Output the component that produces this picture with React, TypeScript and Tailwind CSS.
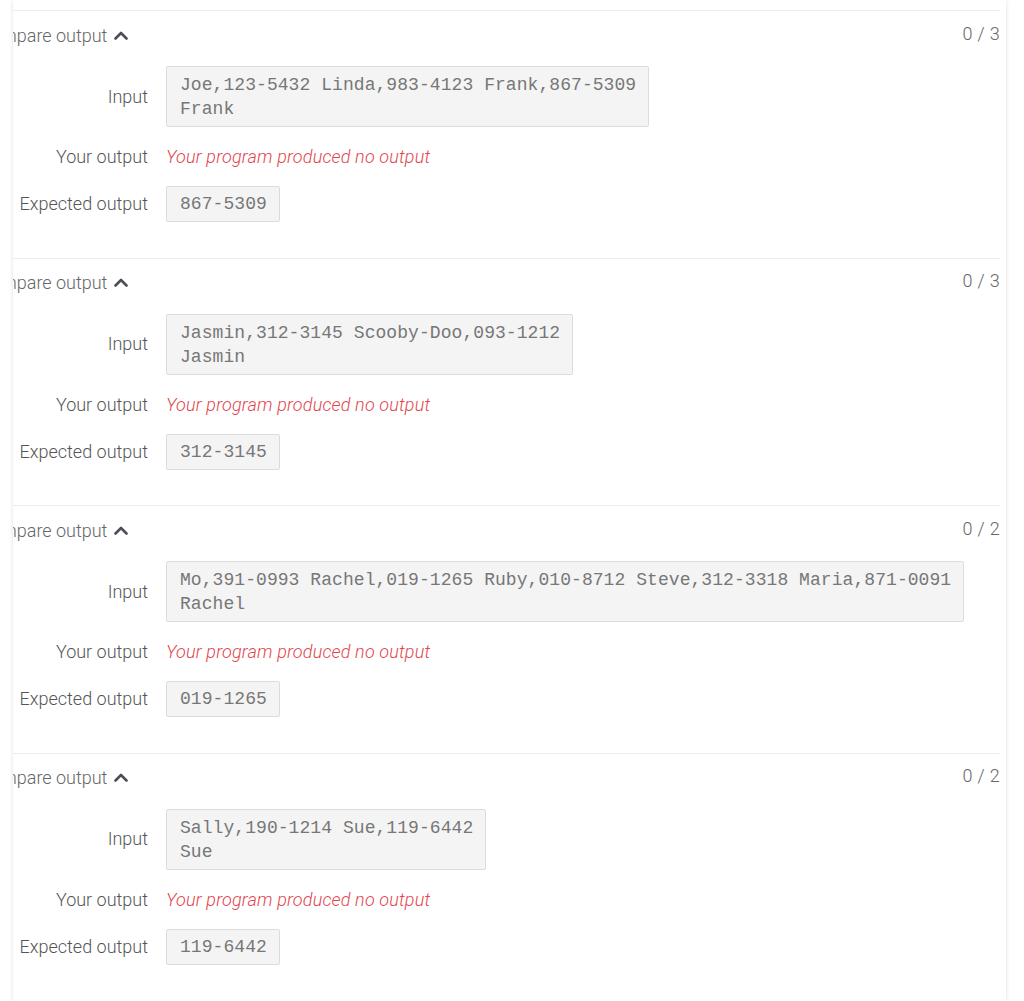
import React from "react";

type Case = { input: string[]; expected: string; score: string };

const cases: Case[] = [
  { input: ["Joe,123-5432 Linda,983-4123 Frank,867-5309", "Frank"], expected: "867-5309", score: "0 / 3" },
  { input: ["Jasmin,312-3145 Scooby-Doo,093-1212", "Jasmin"], expected: "312-3145", score: "0 / 3" },
  { input: ["Mo,391-0993 Rachel,019-1265 Ruby,010-8712 Steve,312-3318 Maria,871-0091", "Rachel"], expected: "019-1265", score: "0 / 2" },
  { input: ["Sally,190-1214 Sue,119-6442", "Sue"], expected: "119-6442", score: "0 / 2" },
];

const roboto = { fontFamily: "Roboto, 'Noto Sans', sans-serif" };
const mono = { fontFamily: "'Liberation Mono', 'Courier New', monospace" };

function Chevron() {
  return (
    <svg width="14" height="9" viewBox="0 0 14 9" className="ml-[7px]">
      <path d="M1.5 7.5 L7 2 L12.5 7.5" fill="none" stroke="#4a4f55" strokeWidth="2.6" strokeLinecap="round" strokeLinejoin="round" />
    </svg>
  );
}

function Section({ c }: { c: Case }) {
  return (
    <div className="border-t border-[#ececec] mr-[6px] pb-[35.5px]">
      <div className="h-[48px] flex items-center justify-between">
        <div className="flex items-center ml-[-34px] text-[18px] font-light text-[#666]">
          <span className="whitespace-nowrap">Compare output</span>
          <Chevron />
        </div>
        <span className="relative top-[-2px] text-[18px] font-light text-[#666] tracking-[0.3px]">{c.score}</span>
      </div>
      <div className="flex items-center mt-[7px]">
        <div className="w-[135px] text-right text-[18px] font-light text-[#555] leading-[24px]">Input</div>
        <div className="ml-[18px] border border-[#dcdcdc] bg-[#f4f4f4] rounded-[2px] pl-[13px] pr-[12px] pt-[6px] pb-[5px] text-[18px] leading-[24px] text-[#777] tracking-[0.06px] whitespace-pre" style={mono}>
          {c.input.map((l, i) => (
            <div key={i}>{l}</div>
          ))}
        </div>
      </div>
      <div className="flex items-center mt-[18px] h-[24px]">
        <div className="w-[135px] text-right text-[18px] font-light text-[#555] leading-[24px]">Your output</div>
        <div className="ml-[18px] text-[18px] font-light italic text-[#e2464d] leading-[24px] tracking-[0.16px] whitespace-nowrap">Your program produced no output</div>
      </div>
      <div className="flex items-center mt-[17px]">
        <div className="w-[135px] text-right text-[18px] font-light text-[#555] leading-[24px] whitespace-nowrap">Expected output</div>
        <div className="ml-[18px] border border-[#dcdcdc] bg-[#f4f4f4] rounded-[2px] pl-[13px] pr-[12px] py-[5px] text-[18px] leading-[24px] text-[#777] tracking-[0.06px] whitespace-pre" style={mono}>
          {c.expected}
        </div>
      </div>
    </div>
  );
}

export default function App() {
  return (
    <div className="w-[1024px] h-[1001px] bg-white overflow-hidden" style={roboto}>
      <div className="ml-[13px] w-[993px] h-[1001px] bg-white shadow-[0_0_4px_rgba(0,0,0,0.14)] overflow-hidden pt-[10px]">
        {cases.map((c, i) => (
          <Section key={i} c={c} />
        ))}
      </div>
    </div>
  );
}
